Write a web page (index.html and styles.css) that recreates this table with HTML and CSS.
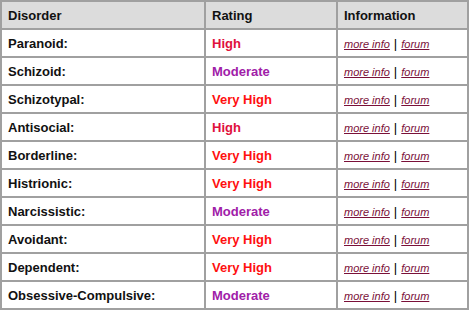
FILE: index.html
```html
<!DOCTYPE html>
<html>
<head>
<meta charset="utf-8">
<link rel="stylesheet" href="styles.css">
</head>
<body>
<table class="grid">
  <thead>
    <tr><th class="c1">Disorder</th><th class="c2">Rating</th><th class="c3">Information</th></tr>
  </thead>
  <tbody>
    <tr><td class="name">Paranoid:</td><td class="rate high">High</td><td class="info"><a href="#">more info</a><span class="sep">|</span><a href="#">forum</a></td></tr>
    <tr><td class="name">Schizoid:</td><td class="rate mod">Moderate</td><td class="info"><a href="#">more info</a><span class="sep">|</span><a href="#">forum</a></td></tr>
    <tr><td class="name">Schizotypal:</td><td class="rate vhigh">Very High</td><td class="info"><a href="#">more info</a><span class="sep">|</span><a href="#">forum</a></td></tr>
    <tr><td class="name">Antisocial:</td><td class="rate high">High</td><td class="info"><a href="#">more info</a><span class="sep">|</span><a href="#">forum</a></td></tr>
    <tr><td class="name">Borderline:</td><td class="rate vhigh">Very High</td><td class="info"><a href="#">more info</a><span class="sep">|</span><a href="#">forum</a></td></tr>
    <tr><td class="name">Histrionic:</td><td class="rate vhigh">Very High</td><td class="info"><a href="#">more info</a><span class="sep">|</span><a href="#">forum</a></td></tr>
    <tr><td class="name">Narcissistic:</td><td class="rate mod">Moderate</td><td class="info"><a href="#">more info</a><span class="sep">|</span><a href="#">forum</a></td></tr>
    <tr><td class="name">Avoidant:</td><td class="rate vhigh">Very High</td><td class="info"><a href="#">more info</a><span class="sep">|</span><a href="#">forum</a></td></tr>
    <tr><td class="name">Dependent:</td><td class="rate vhigh">Very High</td><td class="info"><a href="#">more info</a><span class="sep">|</span><a href="#">forum</a></td></tr>
    <tr><td class="name">Obsessive-Compulsive:</td><td class="rate mod">Moderate</td><td class="info"><a href="#">more info</a><span class="sep">|</span><a href="#">forum</a></td></tr>
  </tbody>
</table>
</body>
</html>
```
FILE: styles.css
```css
html, body {
  margin: 0;
  padding: 0;
  background: #ffffff;
}
.grid {
  border-collapse: separate;
  border-spacing: 0;
  border: 1px solid #a0a0a0;
  width: 469px;
  font-family: "Liberation Sans", Arial, sans-serif;
  font-size: 13px;
  color: #000000;
}
.grid th, .grid td {
  border: 1px solid #a0a0a0;
  padding: 0 6px;
  text-align: left;
  vertical-align: middle;
}
.grid th {
  background: #dcdcdc;
  height: 26px;
  font-weight: bold;
  color: #111111;
}
.grid td {
  height: 26px;
}
.c1 { width: 190px; }
.c2 { width: 118px; }
.name {
  font-weight: bold;
  color: #111111;
}
.rate { font-weight: bold; }
.high { color: #e0103c; }
.vhigh { color: #ff1010; }
.mod { color: #a020a8; }
.info {
  font-size: 11px;
  padding-left: 7px;
}
.info a {
  color: #7a1038;
  font-style: italic;
  text-decoration: underline;
}
.sep {
  font-size: 13px;
  margin: 0 4px;
  color: #000000;
}
```
